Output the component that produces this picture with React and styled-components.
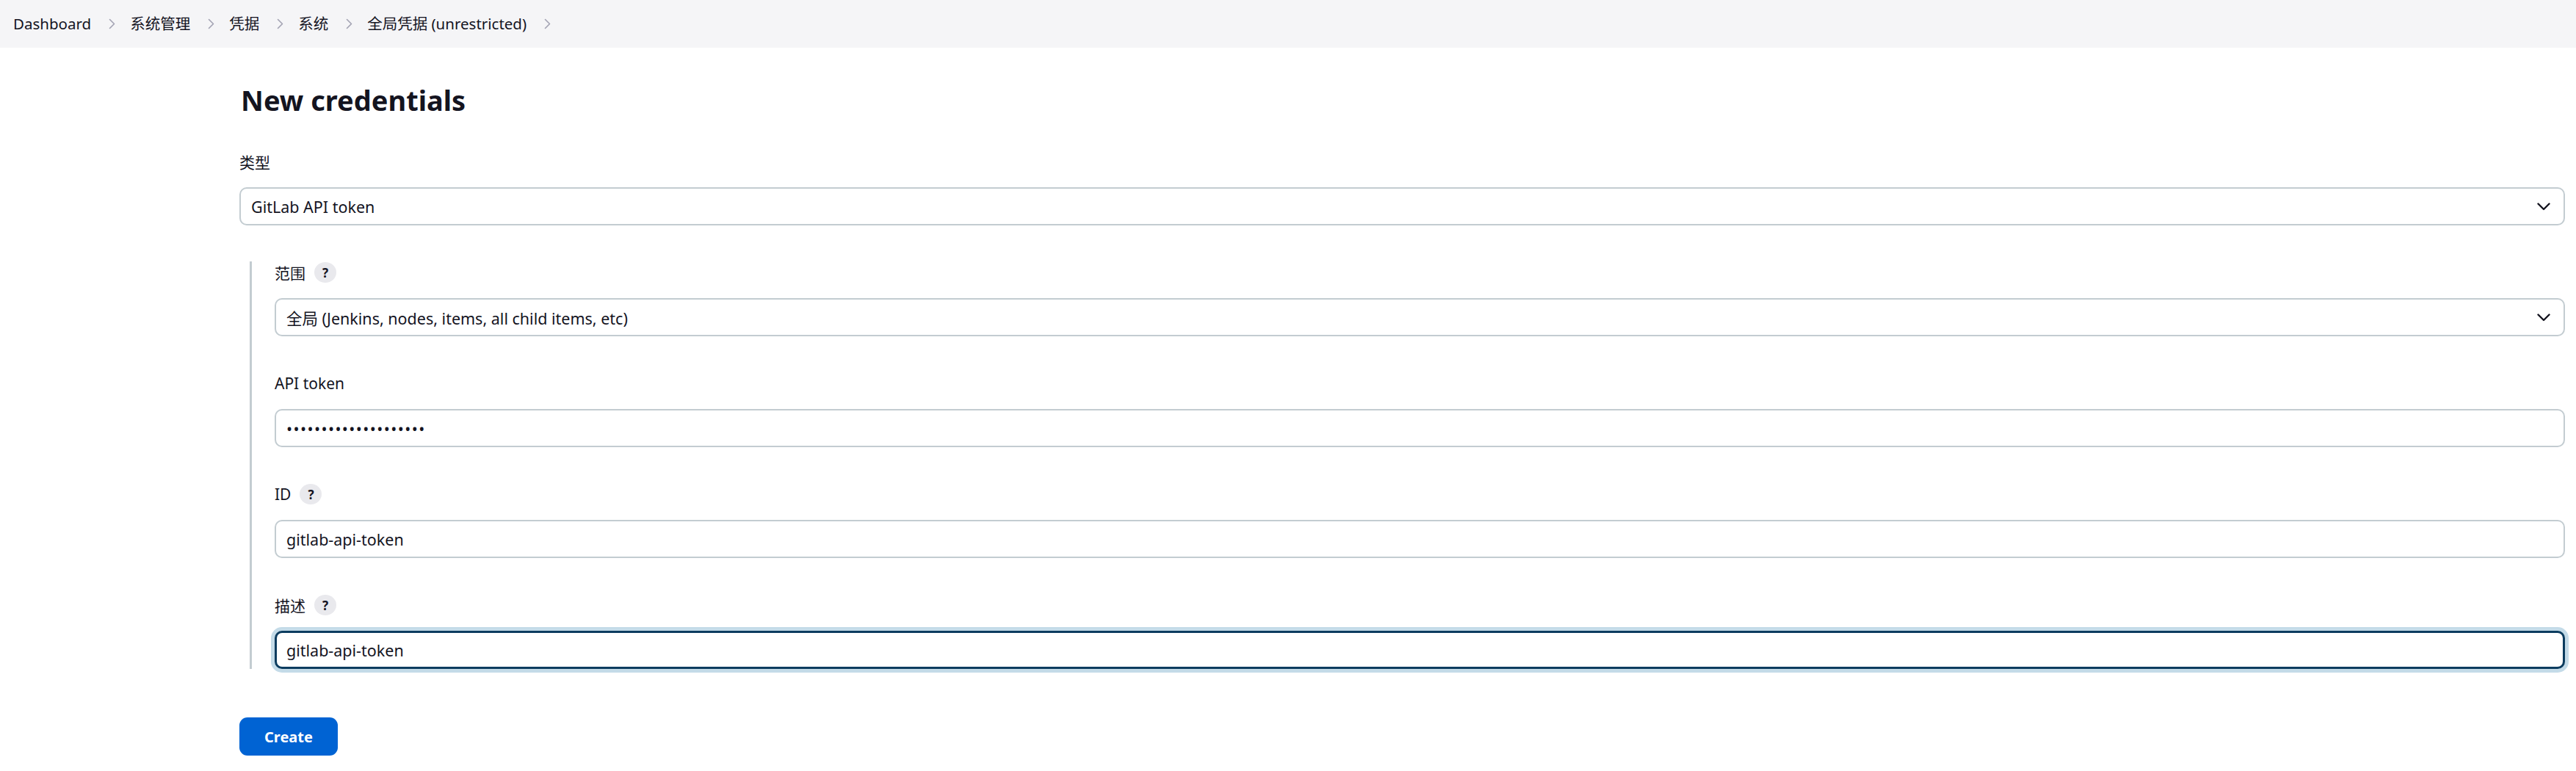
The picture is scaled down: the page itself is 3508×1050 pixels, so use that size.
import React from "react";
import styled, { createGlobalStyle, css } from "styled-components";

const GlobalStyle = createGlobalStyle`
  html, body {
    margin: 0;
    padding: 0;
    background: #ffffff;
  }
  body {
    font-family: "Noto Sans", "Noto Sans CJK SC", sans-serif;
    color: #14141f;
  }
  * { box-sizing: border-box; }
`;

const Page = styled.div`
  width: 100%;
  min-height: 1050px;
`;

const Breadcrumbs = styled.nav`
  height: 65px;
  background: #f5f5f7;
  display: flex;
  align-items: center;
  padding-left: 18px;
`;

const Crumb = styled.span`
  font-size: 20.5px;
  line-height: 1;
  color: #14141f;
  white-space: nowrap;
`;

const Sep = styled.svg`
  width: 9px;
  height: 15px;
  margin: 0 20px 0 24px;
  flex: none;
`;

const Main = styled.main`
  padding: 0 15px 0 326px;
`;

const Title = styled.h1`
  margin: 47px 0 0 2px;
  font-size: 38px;
  line-height: 48px;
  font-weight: 700;
  color: #14141f;
`;

const Field = styled.div`
  display: flex;
  flex-direction: column;
  margin-top: ${(p) => p.$top || 0}px;
`;

const LabelRow = styled.div`
  display: flex;
  align-items: center;
  height: 30px;
  margin-bottom: 20px;
  font-size: 21px;
  color: #14141f;
`;

const Help = styled.span`
  display: inline-flex;
  align-items: center;
  justify-content: center;
  width: 30px;
  height: 28px;
  margin-left: 12px;
  border-radius: 50%;
  background: #e9e9ed;
  font-size: 17px;
  font-weight: 700;
  color: #14141f;
`;

const boxBase = css`
  width: 100%;
  height: 52px;
  border: 2px solid #c3ccd1;
  border-radius: 10px;
  background: #fff;
  font-family: "Noto Sans", "Noto Sans CJK SC", sans-serif;
  font-size: 21.5px;
  color: #14141f;
`;

const SelectBox = styled.div`
  ${boxBase}
  display: flex;
  align-items: center;
  justify-content: space-between;
  padding: 0 18px 0 14px;
`;

const Chevron = styled.svg`
  width: 18px;
  height: 11px;
  flex: none;
`;

const TextInput = styled.input`
  ${boxBase}
  display: block;
  padding: 0 14px;
  outline: none;
  ${(p) =>
    p.$masked &&
    css`
      letter-spacing: 1.4px;
    `}
  ${(p) =>
    p.$focused &&
    css`
      border: 3px solid #0c3c5f;
      padding: 0 13px;
      box-shadow: 0 0 0 5px #c4dbe8;
    `}
`;

const Section = styled.div`
  margin: 49px 0 0 14px;
  padding-left: 31px;
  border-left: 3px solid #c3ccd1;
  display: flex;
  flex-direction: column;
  gap: 49px;
`;

const CreateButton = styled.button`
  margin-top: 66px;
  width: 134px;
  height: 52px;
  border: none;
  border-radius: 11px;
  background: #0063d3;
  color: #fff;
  font-family: "Noto Sans", sans-serif;
  font-size: 20px;
  font-weight: 700;
  cursor: pointer;
`;

const crumbs = ["Dashboard", "系统管理", "凭据", "系统", "全局凭据 (unrestricted)"];

function SepIcon() {
  return (
    <Sep viewBox="0 0 9 15" fill="none">
      <path d="M1.5 1.5 L7.5 7.5 L1.5 13.5" stroke="#a3a3b3" strokeWidth="1.6" strokeLinecap="round" strokeLinejoin="round" />
    </Sep>
  );
}

function Select({ children }) {
  return (
    <SelectBox>
      <span>{children}</span>
      <Chevron viewBox="0 0 18 11" fill="none">
        <path d="M1.5 1.5 L9 9 L16.5 1.5" stroke="#14141f" strokeWidth="2.4" strokeLinecap="round" strokeLinejoin="round" />
      </Chevron>
    </SelectBox>
  );
}

function Label({ text, help }) {
  return (
    <LabelRow>
      <span>{text}</span>
      {help && <Help>?</Help>}
    </LabelRow>
  );
}

export default function App() {
  return (
    <Page>
      <GlobalStyle />
      <Breadcrumbs>
        {crumbs.map((c) => (
          <React.Fragment key={c}>
            <Crumb>{c}</Crumb>
            <SepIcon />
          </React.Fragment>
        ))}
      </Breadcrumbs>
      <Main>
        <Title>New credentials</Title>
        <Field $top={45}>
          <Label text="类型" />
          <Select>GitLab API token</Select>
        </Field>
        <Section>
          <Field>
            <Label text="范围" help />
            <Select>全局 (Jenkins, nodes, items, all child items, etc)</Select>
          </Field>
          <Field>
            <Label text="API token" />
            <TextInput type="password" $masked readOnly defaultValue="12345678901234567890" />
          </Field>
          <Field>
            <Label text="ID" help />
            <TextInput readOnly defaultValue="gitlab-api-token" />
          </Field>
          <Field>
            <Label text="描述" help />
            <TextInput $focused readOnly defaultValue="gitlab-api-token" />
          </Field>
        </Section>
        <CreateButton>Create</CreateButton>
      </Main>
    </Page>
  );
}
